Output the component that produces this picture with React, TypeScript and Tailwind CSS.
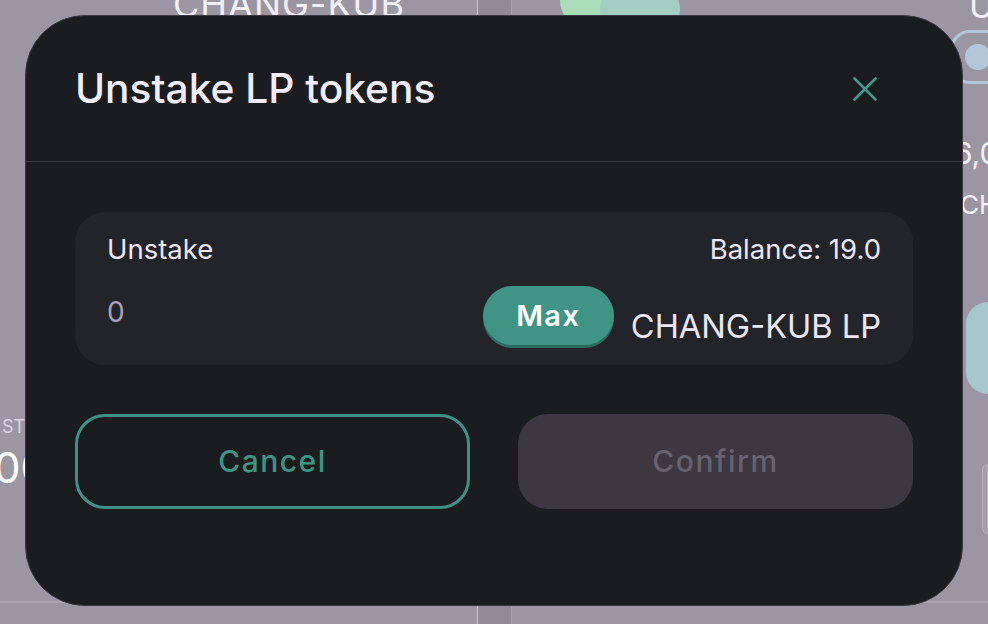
import { X } from "lucide-react";

// faded page behind the dialog overlay
const BackdropPage = () => {
    return (
        <div className="flex h-[624px] w-[988px] bg-[#9a97a2] text-[#f2f0f7]">
            {/* Left column */}
            <div className="flex w-[477px] flex-col">
                <div className="-mt-[16px] pl-[173px] text-[36px] leading-[40px] tracking-[1px]">CHANG-KUB</div>
                <div className="mt-[392px] -ml-[2px] flex flex-col">
                    <span className="pl-[4px] text-[18px] leading-[22px] text-[#d9d5e2]">ST</span>
                    <span className="mt-[8px] -ml-[4px] text-[42px] leading-[44px] text-white">0000</span>
                </div>
                <div className="mt-auto mb-[21px] h-[2px] bg-[#a9a6b2]" />
            </div>
            <div className="w-px bg-[#b6cde0]" />
            <div className="flex w-[33px] flex-col bg-[#8f8c97]">
                <div className="mt-auto mb-[21px] h-[2px] bg-[#a9a6b2]" />
            </div>
            <div className="w-px bg-[#a7a4ae]" />
            {/* Right column */}
            <div className="flex flex-1 flex-col">
                <div className="flex">
                    <div className="-mt-[30px] ml-[48px] h-[60px] w-[60px] rounded-full bg-[#a9dcb8]" />
                    <div className="-mt-[20px] -ml-[20px] h-[60px] w-[80px] rounded-full bg-[#a5cec3]" />
                    <div className="ml-auto flex w-[38px] flex-col items-start">
                        <span className="-mt-[10px] ml-[19px] text-[34px] leading-[32px]">U</span>
                        <div className="mt-[8px] flex h-[54px] w-[60px] items-center rounded-[20px] border-[3px] border-[#b4c7d8] pl-[12px]">
                            <div className="h-[26px] w-[26px] rounded-full bg-[#b4c7d8]" />
                        </div>
                    </div>
                </div>
                <div className="mt-[52px] flex flex-col items-end">
                    <span className="w-[34px] overflow-hidden text-[30px] leading-[34px] whitespace-nowrap">6,000</span>
                    <span className="mt-[20px] w-[28px] overflow-hidden text-[26px] leading-[30px] whitespace-nowrap">CHANG</span>
                    <div className="mt-[82px] h-[92px] w-[22px] rounded-l-[24px] bg-[#a7c8cb]" />
                    <div className="mt-[70px] h-[70px] w-[6px] rounded-l-[10px] border border-[#b2afba] bg-[#a3a0ab]" />
                </div>
                <div className="mt-auto mb-[21px] h-[2px] bg-[#a9a6b2]" />
            </div>
        </div>
    )
}

const App = () => {
    return (
        <div className="relative h-[624px] w-[988px] overflow-hidden font-['Inter',sans-serif]">
            <BackdropPage />

            {/* Dialog */}
            <div className="absolute top-[15px] left-[25px] flex h-[591px] w-[938px] flex-col rounded-[60px] border-[1.5px] border-[#3b3944] bg-[#1b1c20]">
                {/* Header */}
                <div className="flex h-[146px] items-center justify-between border-b-[1.5px] border-[#373540] pr-[76px] pl-[49px]">
                    <span className="text-[40.7px] leading-[48px] font-medium text-[#f1edf8]">Unstake LP tokens</span>
                    <X size={42} strokeWidth={1.5} className="text-[#3e9a86]" />
                </div>

                {/* Body */}
                <div className="flex flex-col px-[49px] pt-[50px]">
                    {/* Amount card */}
                    <div className="flex h-[153px] flex-col rounded-[30px] bg-[#232429] px-[32px] pt-[20px]">
                        <div className="flex items-center justify-between text-[27.5px] leading-[34px] text-[#ebe7f3]">
                            <span>Unstake</span>
                            <span>Balance: 19.0</span>
                        </div>
                        <div className="mt-[20px] flex items-start">
                            <span className="flex-1 pt-[9px] text-[28px] leading-[34px] text-[#a7a1bc]">0</span>
                            <button className="h-[59px] w-[131px] rounded-full bg-[#3f9484] text-[29px] font-semibold tracking-[1.5px] text-white shadow-[0_3px_0_#2c6b5f]">
                                Max
                            </button>
                            <span className="mt-[20px] ml-[17px] text-[32.6px] leading-[40px] text-[#ebe7f3]">CHANG-KUB LP</span>
                        </div>
                    </div>

                    {/* Actions */}
                    <div className="mt-[49px] grid grid-cols-2 gap-[48px]">
                        <button className="h-[95px] rounded-[30px] border-[3px] border-[#3e9183] text-[30px] font-medium tracking-[1.5px] text-[#3e9584]">
                            Cancel
                        </button>
                        <button className="h-[95px] rounded-[30px] bg-[#3b3842] text-[30px] font-medium tracking-[1.5px] text-[#66626e]">
                            Confirm
                        </button>
                    </div>
                </div>
            </div>
        </div>
    )
}

export default App;
